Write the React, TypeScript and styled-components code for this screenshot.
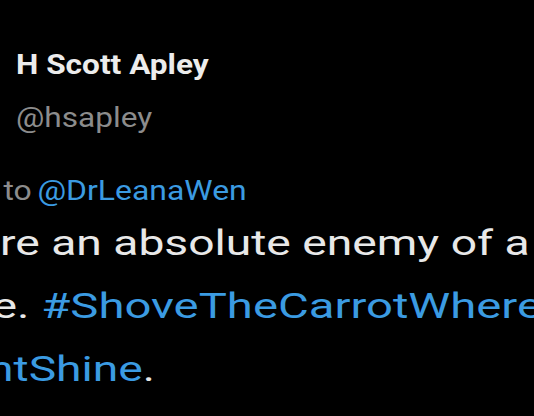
import React from "react";
import styled, { createGlobalStyle } from "styled-components";

const Global = createGlobalStyle`
  html, body { margin: 0; padding: 0; background: #000; }
  body { width: 534px; height: 416px; overflow: hidden; }
`;

const Screen = styled.div`
  width: 534px;
  height: 416px;
  background: #000;
  overflow: hidden;
  font-family: Roboto, "Noto Sans", sans-serif;
  padding-top: 49px;
  box-sizing: border-box;
`;

const Header = styled.div`
  display: flex;
  flex-direction: column;
  gap: 21px;
  padding-left: 16px;
`;

const Stretch = styled.div<{ $sx: number; $shift?: number }>`
  transform: scaleX(${(p) => p.$sx});
  transform-origin: left center;
  margin-left: ${(p) => p.$shift ?? 0}px;
  white-space: nowrap;
`;

const Name = styled(Stretch)`
  font-size: 27px;
  font-weight: 700;
  line-height: 32px;
  color: #ececec;
`;

const Handle = styled(Stretch)`
  font-size: 27px;
  line-height: 32px;
  color: #8c8c8c;
`;

const Reply = styled(Stretch)`
  margin-top: 41px;
  padding-left: 3px;
  font-size: 28px;
  line-height: 32px;
  color: #8c8c8c;
  word-spacing: -2px;
`;

const Link = styled.span`
  color: #3b9be2;
`;

const Body = styled.div`
  margin-top: 5px;
  font-size: 35px;
  line-height: 63px;
  color: #e8e8e8;
`;

const Line = styled(Stretch)``;

export default function App() {
  return (
    <>
      <Global />
      <Screen>
        <Header>
          <Name $sx={1.17}>H Scott Apley</Name>
          <Handle $sx={1.17}>@hsapley</Handle>
        </Header>
        <Reply $sx={1.14}>
          to <Link>@DrLeanaWen</Link>
        </Reply>
        <Body>
          <Line $sx={1.32}>re an absolute enemy of a</Line>
          <Line $sx={1.35} $shift={-8}>
            e. <Link>#ShoveTheCarrotWhere</Link>
          </Line>
          <Line $sx={1.32} $shift={-12}>
            <Link>ntShine</Link>.
          </Line>
        </Body>
      </Screen>
    </>
  );
}
